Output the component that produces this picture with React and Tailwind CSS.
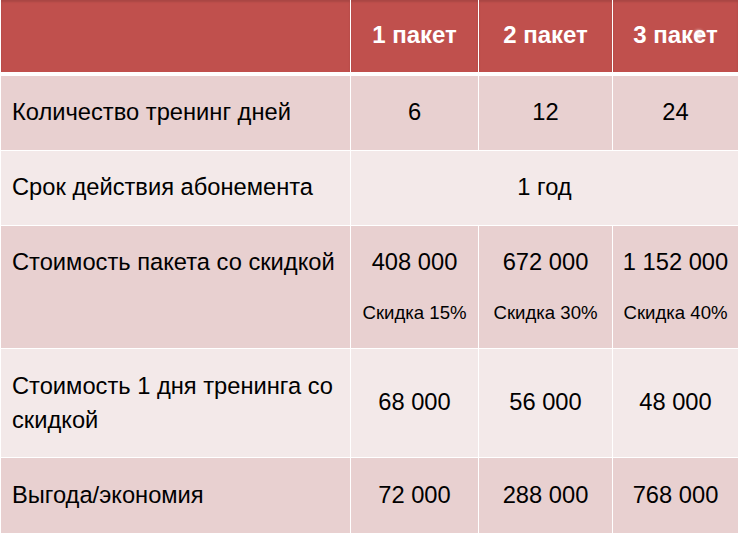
export default function App() {
  const font = { fontFamily: '"Liberation Sans", Arial, sans-serif' };
  const dark = "bg-[#E8D0D0]";
  const light = "bg-[#F3E9E9]";
  const cols = "grid grid-cols-[349px_127px_133px_125px] gap-x-px";
  return (
    <div className="w-[739px] h-[533px] bg-white flex flex-col px-px text-black" style={font}>
      <div className={`${cols} h-[72px] mb-[4px]`}>
        <div className="bg-[#C0504D] shadow-[inset_0_2px_2px_rgba(0,0,0,0.12)]" />
        <div className="bg-[#C0504D] shadow-[inset_0_2px_2px_rgba(0,0,0,0.12)] flex items-center justify-center text-white font-bold text-[24px] pb-[2px]">1 пакет</div>
        <div className="bg-[#C0504D] shadow-[inset_0_2px_2px_rgba(0,0,0,0.12)] flex items-center justify-center text-white font-bold text-[24px] pb-[2px]">2 пакет</div>
        <div className="relative bg-[#C0504D] shadow-[inset_0_2px_2px_rgba(0,0,0,0.12)] flex items-center justify-center text-white font-bold text-[24px] pb-[2px]">
          3 пакет
          <span className="absolute left-[82px] top-[30px] w-[7px] h-[9px] rounded-full bg-white/80 blur-[1.5px]" />
        </div>
      </div>

      <div className={`${cols} h-[74px] mb-px text-[23.7px]`}>
        <div className={`${dark} flex items-center pl-[11px]`}>Количество тренинг дней</div>
        <div className={`${dark} flex items-center justify-center`}>6</div>
        <div className={`${dark} flex items-center justify-center`}>12</div>
        <div className={`${dark} flex items-center justify-center`}>24</div>
      </div>

      <div className={`${cols} h-[74px] mb-px text-[23.7px]`}>
        <div className={`${light} flex items-center pl-[11px]`}>Срок действия абонемента</div>
        <div className={`${light} col-span-3 flex items-center justify-center`}>1 год</div>
      </div>

      <div className={`${cols} h-[122px] mb-px`}>
        <div className={`${dark} pl-[11px] pt-[19px] text-[23.7px] leading-[34px]`}>Стоимость пакета со скидкой</div>
        {[
          ["408 000", "Скидка 15%"],
          ["672 000", "Скидка 30%"],
          ["1 152 000", "Скидка 40%"],
        ].map(([v, d]) => (
          <div key={v} className={`${dark} flex flex-col items-center pt-[19px]`}>
            <div className="text-[23.7px] leading-[34px]">{v}</div>
            <div className="text-[18.6px] leading-[24px] mt-[22px]">{d}</div>
          </div>
        ))}
      </div>

      <div className={`${cols} h-[108px] mb-px text-[23.7px]`}>
        <div className={`${light} flex items-center pl-[11px] leading-[34px]`}>
          <div>
            Стоимость 1 дня тренинга со
            <br />
            скидкой
          </div>
        </div>
        <div className={`${light} flex items-center justify-center`}>68 000</div>
        <div className={`${light} flex items-center justify-center`}>56 000</div>
        <div className={`${light} flex items-center justify-center`}>48 000</div>
      </div>

      <div className={`${cols} h-[75px] text-[23.7px]`}>
        <div className={`${dark} flex items-center pl-[11px]`}>Выгода/экономия</div>
        <div className={`${dark} flex items-center justify-center`}>72 000</div>
        <div className={`${dark} flex items-center justify-center`}>288 000</div>
        <div className={`${dark} flex items-center justify-center`}>768 000</div>
      </div>
    </div>
  );
}
